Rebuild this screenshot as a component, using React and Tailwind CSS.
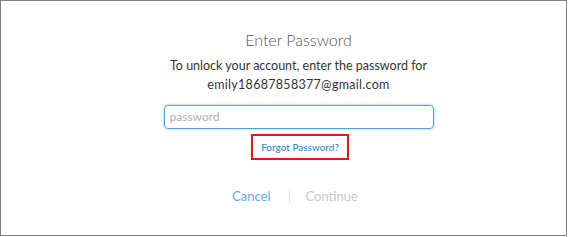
import React from "react";

const App = () => {
  return (
    <div className="w-[568px] h-[237px] bg-white">
      <div
        className="flex flex-col items-center w-[567px] h-[236px] border border-[#7f7f7f] bg-white pl-[30px]"
        style={{ fontFamily: "Lato, 'Open Sans', sans-serif" }}
      >
        <div className="mt-[28px] text-[16px] font-light text-[#555] leading-[21px]">
          Enter Password
        </div>
        <div className="mt-[6px] text-[12.5px] text-[#333] leading-[19px] text-center">
          <div>To unlock your account, enter the password for</div>
          <div className="tracking-[0.3px]">emily18687858377@gmail.com</div>
        </div>
        <div className="mt-[11px] w-[270px] h-[24px] rounded-[4px] border border-[#4ea3dc] shadow-[0_0_3px_#8cc3ea] flex items-center px-[5px]">
          <span className="text-[12px] text-[#b0b0b0]">password</span>
        </div>
        <div className="mt-[5px] ml-[3px] w-[98px] h-[26px] border-2 border-[#e8161b] flex items-center justify-center">
          <span className="text-[10px] text-[#1e7fc8]">Forgot Password?</span>
        </div>
        <div className="mt-[27px] mr-[7px] flex items-center">
          <span className="text-[13px] text-[#63aae2]">Cancel</span>
          <span className="ml-[19px] mr-[15px] w-px h-[15px] bg-[#e0e0e0]" />
          <span className="text-[13px] text-[#c8c8c8]">Continue</span>
        </div>
      </div>
    </div>
  );
};

export default App;
